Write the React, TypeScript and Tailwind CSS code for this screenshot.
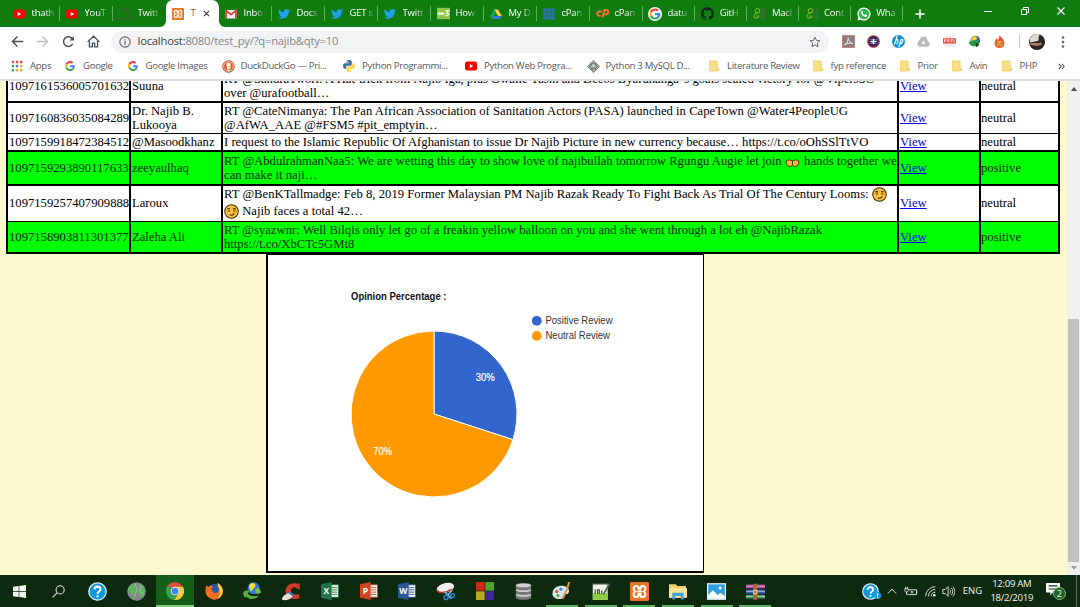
import React from "react";

type Kids = { children?: React.ReactNode };

const Svg = ({ children, vb = "0 0 16 16", cls = "size-[12px]" }: Kids & { vb?: string; cls?: string }) => (
  <svg viewBox={vb} className={`block shrink-0 ${cls}`} fill="none">
    {children}
  </svg>
);

/* ---------- shared brand icons ---------- */
const YouTube = () => (
  <Svg>
    <rect x="0" y="2" width="16" height="12" rx="3" fill="#f00" />
    <path d="M6.3 5.2v5.6L11 8z" fill="#fff" />
  </Svg>
);
const Twitter = () => (
  <Svg vb="0 0 24 24">
    <path
      fill="#1da1f2"
      d="M24 4.6a10 10 0 0 1-2.8.8 5 5 0 0 0 2.1-2.7 10 10 0 0 1-3.1 1.2 4.9 4.9 0 0 0-8.4 4.5A14 14 0 0 1 1.7 3.100a4.900 4.900 0 0 0 1.500 6.600 4.900 4.900 0 0 1-2.200-.6v.06a4.900 4.900 0 0 0 4 4.800 5 5 0 0 1-2.200.1 4.900 4.900 0 0 0 4.600 3.400A10 10 0 0 1 0 19.500a14 14 0 0 0 7.500 2.200c9.100 0 14-7.500 14-14v-.6A10 10 0 0 0 24 4.600z"
    />
  </Svg>
);
const GoogleG = ({ disc = false }: { disc?: boolean }) => (
  <Svg vb={disc ? "-6 -6 60 60" : "0 0 48 48"} cls={disc ? "size-[14px] -mx-px" : "size-[10px] mx-px"}>
    {disc && <circle cx="24" cy="24" r="30" fill="#fff" />}
    <path fill="#EA4335" d="M24 9.500c3.540 0 6.710 1.220 9.210 3.600l6.850-6.850C35.900 2.380 30.470 0 24 0 14.620 0 6.510 5.380 2.560 13.220l7.980 6.190C12.430 13.720 17.740 9.500 24 9.500z" />
    <path fill="#4285F4" d="M46.980 24.550c0-1.570-.15-3.090-.38-4.550H24v9.020h12.940c-.58 2.960-2.260 5.480-4.780 7.180l7.730 6c4.510-4.180 7.090-10.360 7.090-17.650z" />
    <path fill="#FBBC05" d="M10.530 28.590a14.500 14.500 0 0 1 0-9.180l-7.980-6.190a24 24 0 0 0 0 21.560z" />
    <path fill="#34A853" d="M24 48c6.480 0 11.930-2.130 15.890-5.810l-7.730-6c-2.150 1.450-4.920 2.300-8.160 2.300-6.260 0-11.570-4.220-13.470-9.910l-7.980 6.190C6.510 42.620 14.620 48 24 48z" />
  </Svg>
);
const Xampp = ({ cls = "size-[12px]" }: { cls?: string }) => (
  <Svg cls={cls}>
    <rect width="16" height="16" rx="1" fill="#ec7424" />
    <path
      d="M5.300 3.300C2.600 3.300 2.400 6.700 4.300 8 2.400 9.300 2.600 12.700 5.300 12.700c1.700 0 2-1.400 2-2.700h1.400c0 1.300.3 2.700 2 2.700 2.700 0 2.900-3.400 1-4.700 1.900-1.300 1.700-4.700-1-4.700-1.700 0-2 1.400-2 2.700H7.300c0-1.300-.3-2.700-2-2.700z"
      stroke="#fff"
      strokeWidth="1.700"
    />
    <path d="M6 8h4" stroke="#fff" strokeWidth="1.300" />
  </Svg>
);
const Gmail = () => (
  <Svg>
    <rect x="0.500" y="2.500" width="15" height="11.500" rx="1" fill="#f4f1f0" />
    <path d="M1.500 14V3.500L8 9l6.500-5.500V14" stroke="#d93a30" strokeWidth="2.200" />
  </Svg>
);
const Page = () => (
  <Svg>
    <path d="M3 1h7l3.500 3.500V15H3zM10 1v4h3.500" stroke="#3f5a35" strokeWidth="1.500" />
  </Svg>
);
const W3 = () => (
  <Svg cls="size-[13px] -mr-px">
    <rect width="16" height="14" y="1" fill="#8fc549" />
    <path d="M1 7l1.300 2.200L3.600 7l1.300 2.200L6.200 7l1.300 2.200L8.800 7M10 4.500h4L12 7.200c3.200 0 2.600 4.300-1.800 3.300" stroke="#fff" strokeWidth="1.400" />
  </Svg>
);
const Drive = () => (
  <Svg>
    <path d="M5.500 2h5l5.300 8.700h-5z" fill="#ffcf48" />
    <path d="M5.500 2L.2 10.700 2.700 14.500 8 6z" fill="#11a861" />
    <path d="M5.200 10.700h10.600l-2.500 3.800H2.700z" fill="#3777e3" />
  </Svg>
);
const BlueGrid = () => (
  <Svg>
    {[0, 1, 2].map((r) =>
      [0, 1, 2].map((c) => <rect key={`${r}${c}`} x={0.300 + c * 5.300} y={0.300 + r * 5.300} width="4.600" height="4.600" fill="#2a72b5" />),
    )}
  </Svg>
);
const CPanel = () => (
  <Svg cls="size-[13px] -mr-px">
    <path d="M7 5.500H4.500a2.700 2.700 0 0 0-.3 5.400h1.600M8.200 12.500L10.300 3.800h2.500a2.500 2.500 0 0 1-.3 5H10" stroke="#ff6c2c" strokeWidth="2.400" />
  </Svg>
);
const GitHub = () => (
  <Svg cls="size-[13px] -mr-px">
    <path
      fill="#12251a"
      d="M8 .3a8 8 0 0 0-2.500 15.600c.4 0 .5-.2.500-.4v-1.400c-2.200.5-2.700-1-2.700-1-.4-1-.9-1.200-.9-1.200-.7-.5.1-.5.1-.5.8 0 1.200.8 1.200.8.700 1.200 1.900.9 2.300.7.1-.5.3-.9.500-1.100-1.800-.2-3.600-.9-3.600-4 0-.8.300-1.500.8-2.100-.1-.2-.4-1 .1-2.100 0 0 .7-.2 2.200.8a7.600 7.600 0 0 1 4 0c1.500-1 2.200-.8 2.200-.8.400 1.100.2 1.900.1 2.100.5.600.8 1.300.8 2.100 0 3.100-1.900 3.700-3.700 3.900.3.300.6.800.6 1.500v2.200c0 .2.100.5.500.4A8 8 0 0 0 8 .3z"
    />
  </Svg>
);
const Gfg = () => (
  <Svg cls="size-[13px] -mr-px">
    <circle cx="5.500" cy="4.500" r="2.700" stroke="#6cb51d" strokeWidth="1.300" />
    <path d="M7 7.500C4 7 1 8.500 1.200 11.500S7 14.500 7.200 11H3.500" stroke="#6cb51d" strokeWidth="1.300" />
    <path d="M10 2.500h4M10 2v12M14 2v12M10 8h4M10 13.500h4" stroke="#4d6a45" strokeWidth="1.300" />
  </Svg>
);
const WhatsApp = () => (
  <Svg cls="size-[14px] -mx-px">
    <path d="M8 .5a7.500 7.500 0 1 1-3.700 14L.5 15.500l1-3.700A7.500 7.500 0 0 1 8 .5z" fill="#fff" />
    <circle cx="8" cy="8" r="6" fill="#2bb741" />
    <path d="M5.300 4.300l1.100.1.700 1.700-.6.800c.6 1.200 1.400 1.900 2.500 2.400l.9-.9 1.700.9c.2 1.500-1 2.200-2.200 2C6.600 10.800 4.700 8.400 4.500 6.300c0-.8.2-1.600.8-2z" fill="#fff" />
  </Svg>
);

const tabs: { label: string; icon: React.ReactNode; active?: boolean }[] = [
  { label: "thath", icon: <YouTube /> },
  { label: "YouT", icon: <YouTube /> },
  { label: "Twitt", icon: <Page /> },
  { label: "T", icon: <Xampp />, active: true },
  { label: "Inbo", icon: <Gmail /> },
  { label: "Docs", icon: <Twitter /> },
  { label: "GET s", icon: <Twitter /> },
  { label: "Twitt", icon: <Twitter /> },
  { label: "How", icon: <W3 /> },
  { label: "My D", icon: <Drive /> },
  { label: "cPan", icon: <BlueGrid /> },
  { label: "cPan", icon: <CPanel /> },
  { label: "datu", icon: <GoogleG disc /> },
  { label: "GitH", icon: <GitHub /> },
  { label: "Macl", icon: <Gfg /> },
  { label: "Cont", icon: <Gfg /> },
  { label: "Wha", icon: <WhatsApp /> },
];

const TabStrip = () => (
  <div className="flex h-[27px] shrink-0 bg-[#107c10] pl-[6.500px] text-[9.500px] tracking-[-0.200px] text-white">
    {tabs.map((t, i) =>
      t.active ? (
        <div key={i} className="relative flex w-[53px] shrink-0 items-center rounded-t-[7px] bg-white pl-[6.500px] text-[#5f6368]">
          <svg viewBox="0 0 6 6" className="absolute bottom-0 -left-[6px] size-[6px]">
            <path d="M6 0v6H0a6 6 0 0 0 6-6z" fill="#fff" />
          </svg>
          <svg viewBox="0 0 6 6" className="absolute -right-[6px] bottom-0 size-[6px]">
            <path d="M0 0v6h6a6 6 0 0 1-6-6z" fill="#fff" />
          </svg>
          {t.icon}
          <span className="ml-[6.500px] w-[7px] whitespace-nowrap">{t.label}</span>
          <Svg vb="0 0 8 8" cls="size-[7px] ml-[5.500px]">
            <path d="M1 1l6 6M7 1L1 7" stroke="#3c4043" strokeWidth="1.300" />
          </Svg>
        </div>
      ) : (
        <div key={i} className={`flex shrink-0 items-center pl-[6.500px] ${i < 12 ? "w-[53px]" : "w-[52.200px]"}`}>
          {t.icon}
          <span className="ml-[6.500px] shrink-0 whitespace-nowrap [mask-image:linear-gradient(to_right,black_60%,rgba(0,0,0,0.25))]">{t.label}</span>
          {i !== 2 && <span className="ml-auto h-[15px] w-px bg-[#5fae57]" />}
        </div>
      ),
    )}
    <div className="flex flex-1 items-center pl-[12px]">
      <Svg vb="0 0 10 10" cls="size-[10px]">
        <path d="M5 .5v9M.5 5h9" stroke="#fff" strokeWidth="1.500" />
      </Svg>
      <Svg vb="0 0 10 10" cls="ml-[58px] mb-[5px] size-[10px]">
        <path d="M1 5.500h8" stroke="#fff" />
      </Svg>
      <Svg vb="0 0 10 10" cls="ml-[27px] mb-[5px] size-[10px]">
        <path d="M1.500 3.500h5v5h-5zM3.500 3V1.500h5v5H7" stroke="#fff" />
      </Svg>
      <Svg vb="0 0 10 10" cls="ml-[26px] mb-[5px] size-[10px]">
        <path d="M1.500 1.500l7 7M8.500 1.500l-7 7" stroke="#fff" strokeWidth="1.100" />
      </Svg>
    </div>
  </div>
);

const extensions: React.ReactNode[] = [
  <Svg cls="size-[13px]">
    <rect width="16" height="16" fill="#8c7b7b" />
    <rect x=".5" y=".5" width="15" height="15" stroke="#c98a8a" />
    <path d="M3 12c3-1 5-5 4.500-8.500C9 9 11 10.500 13.500 10.500c-3-1-7-.5-10.500 1.500z" stroke="#eee" strokeWidth="1.200" />
  </Svg>,
  <Svg cls="size-[13px]">
    <circle cx="8" cy="8" r="7" fill="#23235e" stroke="#a8323e" strokeWidth="1.500" />
    <path d="M3 5.500h10M3 8h10M3 10.500h10" stroke="#8c95dd" strokeWidth=".8" />
    <path d="M8 4.500v7M4.500 8h7" stroke="#fff" strokeWidth="1.800" />
  </Svg>,
  <Svg cls="size-[13px]">
    <circle cx="8" cy="8" r="8" fill="#0b91d3" />
    <path d="M6.500 1L3 11.500M4.700 6.500c2-1.300 3-.6 2.500 1L6 11.500M11.500 5L8.300 15M10.800 5.300h1.600c1.300 0 1.200 1 .8 2.200-.7 2.300-1 3.200-2.400 3.200H9.500" stroke="#fff" strokeWidth="1.500" />
  </Svg>,
  <Svg cls="size-[13px]">
    <path d="M5.500 2h5L16 11l-2.500 3.500h-11L0 11z" fill="#b9b9b9" />
    <path d="M8 6.500l2.700 4.500H5.300z" fill="#f7f7f7" />
  </Svg>,
  <Svg cls="size-[13px]">
    <rect x="1.500" y="1" width="13" height="14" fill="#f5eeee" />
    <rect y="4" width="16" height="6.500" fill="#e8483d" />
    <path d="M2 9V5.500h1.500v1.800H2M6 5.500h1.200v3H6zM10 9V5.500h2M10 7.200h1.600M13.500 5v4.500" stroke="#fff" strokeWidth=".9" />
  </Svg>,
  <Svg cls="size-[13px]">
    <circle cx="9" cy="7" r="6" fill="#2a66c8" />
    <path d="M5 3c2-2 6-2 6 1S7 7 6 9 2 6 5 3z" fill="#f3cf2b" />
    <path d="M1 9c4-3 9-3 13-1-1 4-4 6-7 6s-5-2-6-5z" fill="#2c9a3a" />
    <path d="M9 9l5 3-4 3z" fill="#143c1a" />
  </Svg>,
  <Svg cls="size-[13px]">
    <path d="M8 0c1 3 6 4 6 10 0 4-3 6-6 6s-6-2-6-6c0-3 1.500-4 2-6l2 2c1-1.500 2-3 2-6z" fill="#e9532b" />
    <circle cx="8" cy="11" r="3.800" fill="#fba83b" />
    <path d="M6 9.500v1.500M10 9.500v1.500M6 12.500c1 1.200 3 1.200 4 0" stroke="#53210d" />
  </Svg>,
];

const Toolbar = () => (
  <div className="flex h-[28px] shrink-0 items-center bg-white pl-[11px] pt-px">
    <Svg cls="size-[13px]">
      <path d="M15 8H2M8 1.800L1.800 8 8 14.200" stroke="#4a4d51" strokeWidth="1.700" />
    </Svg>
    <Svg cls="size-[13px] ml-[12px]">
      <path d="M1 8h13M8 1.800L14.200 8 8 14.200" stroke="#bcbec1" strokeWidth="1.700" />
    </Svg>
    <Svg cls="size-[13px] ml-[12.500px]">
      <path d="M13.200 11A6 6 0 1 1 12.500 4.200L14 5.800" stroke="#4a4d51" strokeWidth="1.800" />
      <path d="M14.500 1.500v5.200H9.300z" fill="#4a4d51" />
    </Svg>
    <Svg cls="size-[13px] ml-[12.500px]">
      <path d="M.8 8.500L8 1.500l7.200 7M3 7.500v7h3.600V10h2.800v4.500H13v-7" stroke="#4a4d51" strokeWidth="1.600" />
    </Svg>
    <div className="ml-[11px] flex h-[22px] w-[718px] items-center rounded-full bg-[#f1f3f4] pl-[8px] pr-[8px] text-[11.200px] tracking-[-0.190px] text-[#80868b]">
      <Svg cls="size-[12px]">
        <circle cx="8" cy="8" r="6.900" stroke="#5f6368" strokeWidth="1.500" />
        <path d="M8 7v4.500M8 4.300v1.600" stroke="#5f6368" strokeWidth="1.700" />
      </Svg>
      <span className="ml-[6.500px] whitespace-nowrap">
        <span className="text-[#3c4043]">localhost:</span>8080/test_py/?q=najib&amp;qty=10
      </span>
      <Svg cls="size-[12px] ml-auto">
        <path d="M8 1.500l2 4.300 4.600.5-3.400 3.200.9 4.700L8 11.900l-4.100 2.300.9-4.700L1.400 6.300 6 5.800z" stroke="#5f6368" strokeWidth="1.300" />
      </Svg>
    </div>
    <div className="ml-[12.500px] flex gap-[12.300px]">
      {extensions.map((e, i) => (
        <React.Fragment key={i}>{e}</React.Fragment>
      ))}
    </div>
    <span className="ml-[12.500px] h-[13px] w-px bg-[#c8cacd]" />
    <Svg cls="size-[16px] ml-[9.500px]">
      <circle cx="8" cy="8" r="8" fill="#2b2422" />
      <path d="M1 4.500A8 8 0 0 1 11 .6C8 4 11 5 9 7L1 8.500z" fill="#dcd8d4" />
      <path d="M1 9.500c4-1 8 0 11-1l1 2c-3 1.500-7 2-12 0z" fill="#a98264" />
    </Svg>
    <Svg cls="size-[14px] ml-[11px]">
      <circle cx="8" cy="2.800" r="1.500" fill="#5f6368" />
      <circle cx="8" cy="8" r="1.500" fill="#5f6368" />
      <circle cx="8" cy="13.200" r="1.500" fill="#5f6368" />
    </Svg>
  </div>
);

const Folder = () => (
  <Svg>
    <path d="M1.500 1h11v12.500l2 .5v1H2.500l-1-1z" fill="#fbdf86" />
    <path d="M12.500 11v3h2v-3z" fill="#eec14a" />
    <path d="M2 1.500h10v13H2z" stroke="#f0cd68" />
  </Svg>
);
const appColors = ["#e04a3c", "#e04a3c", "#d9453a", "#3d9c52", "#4a79d8", "#e0b23c", "#3d9c52", "#e0a83c", "#e0a83c"];

const bookmarks: { w: string; label: string; icon: React.ReactNode }[] = [
  {
    w: "w-[53px]",
    label: "Apps",
    icon: (
      <Svg>
        {appColors.map((c, i) => (
          <rect key={i} x={1 + (i % 3) * 5.500} y={1 + Math.floor(i / 3) * 5.500} width="3.200" height="3.200" fill={c} />
        ))}
      </Svg>
    ),
  },
  { w: "w-[62.500px]", label: "Google", icon: <GoogleG /> },
  { w: "w-[95px]", label: "Google Images", icon: <GoogleG /> },
  {
    w: "w-[121.500px]",
    label: "DuckDuckGo — Pri...",
    icon: (
      <Svg cls="size-[13px] -mr-px">
        <circle cx="8" cy="8" r="7.200" fill="#de5833" stroke="#c54824" />
        <circle cx="8" cy="8" r="6" stroke="#fff" strokeWidth=".8" />
        <path d="M5.500 5c1-2.500 5-2 5 1l-.3 7.200c-1.500.6-2.500.5-3.200.2z" fill="#fff" />
        <path d="M7.500 7.500h4l-1 1.500h-3z" fill="#fdd20a" />
        <path d="M8 10.500l3.500 1-1 1.500H8z" fill="#4cba3c" />
      </Svg>
    ),
  },
  {
    w: "w-[122px]",
    label: "Python Programmi...",
    icon: (
      <Svg>
        <path d="M8 0C4.500 0 4.600 1.500 4.600 3.500H8.200V4.200H3C0 4.200 0 7.500 0 8s0 3.800 2.800 3.800H4V9.500C4 8 5 7.500 6 7.500h4c1 0 1.700-.8 1.700-1.700V3C11.700.5 10 0 8 0z" fill="#3771a3" />
        <path d="M8 16c3.500 0 3.400-1.500 3.400-3.500H7.800v-.7H13c3 0 3-3.300 3-3.800s0-3.800-2.800-3.800h-.9v2.300c0 1.500-1 2-2 2h-4c-1 0-1.900.8-1.900 1.700V13c0 2.500 1.600 3 3.600 3z" fill="#ffd343" />
        <circle cx="6.300" cy="2.100" r=".8" fill="#fff" />
        <circle cx="9.700" cy="13.900" r=".8" fill="#fff" />
      </Svg>
    ),
  },
  { w: "w-[121.500px]", label: "Python Web Progra...", icon: <YouTube /> },
  {
    w: "w-[121.500px]",
    label: "Python 3 MySQL D...",
    icon: (
      <Svg cls="size-[13px] -mr-px">
        <path d="M8 .5L15.500 8 8 15.500.5 8z" fill="#a5aaa5" stroke="#636b66" />
        <circle cx="8" cy="8" r="3.500" fill="#dfe5e0" stroke="#39463e" />
        <path d="M6.500 7v1M9.500 7v1M6.500 9.500h3" stroke="#39463e" />
      </Svg>
    ),
  },
  { w: "w-[103.500px]", label: "Literature Review", icon: <Folder /> },
  { w: "w-[87px]", label: "fyp reference", icon: <Folder /> },
  { w: "w-[52px]", label: "Prior", icon: <Folder /> },
  { w: "w-[50px]", label: "Avin", icon: <Folder /> },
  { w: "w-[57px]", label: "PHP", icon: <Folder /> },
];

const BookmarkBar = () => (
  <div className="flex h-[24px] shrink-0 items-center bg-white pb-px pl-[11px] text-[9.600px] tracking-[-0.310px] text-[#55595e]">
    {bookmarks.map((b, i) => (
      <div key={i} className={`flex shrink-0 items-center ${b.w}`}>
        {b.icon}
        <span className="ml-[7px] whitespace-nowrap">{b.label}</span>
      </div>
    ))}
    <Svg cls="size-[7px]">
      <path d="M2 2l5 6-5 6M9 2l5 6-5 6" stroke="#4a4d51" strokeWidth="2.500" />
    </Svg>
  </div>
);

/* ---------- page content ---------- */
const Smirk = () => (
  <svg viewBox="0 0 16 16" className="mb-[2px] inline-block size-[15px] align-middle" fill="none">
    <circle cx="8" cy="8" r="7.200" fill="#fcc13c" stroke="#3a2d14" strokeWidth="1.100" />
    <path d="M3.500 5.500c1-.8 2-.8 3 0M9.500 5.500c1-.8 2-.8 3 0M4 7.500h2.300M10 7.500h2.300M6 11.500c2 .8 4 .3 5-1.500" stroke="#3a2d14" strokeWidth="1.100" />
  </svg>
);
const Hands = () => (
  <svg viewBox="0 0 16 10" className="mx-[0.500px] inline-block h-[9px] w-[15px] align-[-3px]" fill="none">
    <path d="M1 2c2-1.500 5-1 6.500 0h1C10 1 13 .5 15 2c.5 3-1.500 6.500-4 6.500-1.500 0-2.500-1-3-2-.5 1-1.500 2-3 2C2.500 8.500.5 5 1 2z" fill="#ffb53d" stroke="#3a2d14" />
    <path d="M8 2v4.500" stroke="#3a2d14" />
  </svg>
);

type Row = { h: string; id: string; user: React.ReactNode; lines: React.ReactNode[]; lineH?: string; track?: string; pos?: boolean };
const rows: Row[] = [
  {
    h: "h-[30px] mb-[2px]",
    id: "1097161536005701632",
    user: "Suuna",
    lines: ["RT @SandraTwori: A Hat-trick from Najib Iga, plus Owalle Yasin and Decos Byaruhanga 's goals sealed victory for @VipersSC", "over @urafootball…"],
  },
  {
    h: "h-[30px] mb-px",
    id: "1097160836035084289",
    track: "tracking-[0.027px]",
    user: (
      <>
        Dr. Najib B.
        <br />
        Lukooya
      </>
    ),
    lines: ["RT @CateNimanya: The Pan African Association of Sanitation Actors (PASA) launched in CapeTown @Water4PeopleUG", "@AfWA_AAE @#FSM5 #pit_emptyin…"],
  },
  {
    h: "h-[16px] mb-[2px]",
    id: "1097159918472384512",
    track: "tracking-[0.010px]",
    user: "@Masoodkhanz",
    lines: ["I request to the Islamic Republic Of Afghanistan to issue Dr Najib Picture in new currency because… https://t.co/oOhSSlTtVO"],
  },
  {
    h: "h-[32px] mb-[2px]",
    id: "1097159293890117633",
    track: "tracking-[0.027px]",
    user: "zeeyaulhaq",
    pos: true,
    lines: [
      <>
        RT @AbdulrahmanNaa5: We are wetting this day to show love of najibullah tomorrow Rgungu Augie let join <Hands /> hands together we
      </>,
      "can make it naji…",
    ],
  },
  {
    h: "h-[35px] mb-px",
    id: "1097159257407909888",
    track: "tracking-[0.025px]",
    user: "Laroux",
    lineH: "h-[17px]",
    lines: [
      <>
        RT @BenKTallmadge: Feb 8, 2019 Former Malaysian PM Najib Razak Ready To Fight Back As Trial Of The Century Looms: <Smirk />
      </>,
      <>
        <Smirk /> Najib faces a total 42…
      </>,
    ],
  },
  {
    h: "h-[30px]",
    id: "1097158903811301377",
    track: "tracking-[0.008px]",
    user: "Zaleha Ali",
    pos: true,
    lines: ["RT @syazwnr: Well Bilqis only let go of a freakin yellow balloon on you and she went through a lot eh @NajibRazak", "https://t.co/XbCTc5GMt8"],
  },
];

const ResultTable = () => (
  <div className="-mt-[10px] ml-[6px] flex w-[1054px] shrink-0 flex-col bg-black px-[2px] pb-[2px] font-['Liberation_Serif',serif] text-[12.650px] leading-[14.200px] whitespace-nowrap text-black">
    {rows.map((r) => {
      const cell = `flex flex-col justify-center pl-px ${r.pos ? "bg-[#00ff00]" : "bg-white"}`;
      return (
        <div key={r.id} className={`grid grid-cols-[121px_90px_674px_80px_77px] gap-x-[2px] ${r.h} ${r.pos ? "text-[#002a00]" : ""}`}>
          <div className={cell}>{r.id}</div>
          <div className={cell}>{r.user}</div>
          <div className={`${cell} ${r.track ?? ""}`}>
            {r.lines.map((l, i) => (
              <div key={i} className={r.lineH ?? "h-[14.200px]"}>
                {l}
              </div>
            ))}
          </div>
          <div className={cell}>
            <span className="text-[#0000ee] underline">View</span>
          </div>
          <div className={cell}>
            <span className="-ml-px">{r.pos ? "positive" : "neutral"}</span>
          </div>
        </div>
      );
    })}
  </div>
);

const Chart = () => (
  <div className="ml-[266px] flex h-[319px] w-[438px] shrink-0 flex-col border-t border-r border-b-2 border-l-2 border-black bg-white">
    <svg viewBox="0 0 435 316" className="block h-[316px] w-[435px]" fontFamily="'Liberation Sans', Arial, sans-serif" fontSize="10">
      <text x="83" y="44.500" fontWeight="bold" textLength="95.500" lengthAdjust="spacingAndGlyphs" fill="#111">
        Opinion Percentage :
      </text>
      <path d="M166 159V76a83 83 0 0 1 78.940 108.650z" fill="#3366cc" stroke="#fff" strokeWidth="1" />
      <path d="M166 159L244.940 184.650A83 83 0 1 1 166 76z" fill="#ff9900" stroke="#fff" strokeWidth="1" />
      <text x="207.700" y="125.500" textLength="18.800" lengthAdjust="spacingAndGlyphs" fill="#fff" stroke="#fff" strokeWidth=".2">
        30%
      </text>
      <text x="105.300" y="199.500" textLength="18.800" lengthAdjust="spacingAndGlyphs" fill="#fff" stroke="#fff" strokeWidth=".2">
        70%
      </text>
      <circle cx="268.800" cy="65.800" r="4.900" fill="#3366cc" />
      <circle cx="268.800" cy="80.900" r="4.900" fill="#ff9900" />
      <text x="277.500" y="69.300" textLength="67" lengthAdjust="spacingAndGlyphs" fill="#333">
        Positive Review
      </text>
      <text x="277.500" y="84.300" textLength="64.500" lengthAdjust="spacingAndGlyphs" fill="#333">
        Neutral Review
      </text>
    </svg>
  </div>
);

const Scrollbar = () => (
  <div className="flex w-[13px] shrink-0 flex-col items-center bg-[#f0f0f0]">
    <Svg vb="0 0 6 4" cls="mt-[6px] h-[4px] w-[6px]">
      <path d="M3 0l3 4H0z" fill="#505050" />
    </Svg>
    <div className="mt-[228px] h-[243px] w-[11px] bg-[#c1c1c1]" />
    <Svg vb="0 0 6 4" cls="mt-[4px] h-[4px] w-[6px]">
      <path d="M3 4l3-4H0z" fill="#a0a0a0" />
    </Svg>
  </div>
);

/* ---------- taskbar ---------- */
const Office = ({ letter, color }: { letter: string; color: string }) => (
  <Svg cls="size-[18px]">
    <rect x="8" y="2.500" width="7.500" height="11" fill="#f7f7f7" stroke={color} strokeWidth=".7" />
    <path d="M9.500 5h5M9.500 7h5M9.500 9h5M9.500 11h5" stroke={color} strokeWidth=".8" />
    <path d="M0 2l9.500-2v16L0 14z" fill={color} />
    <text x="4.700" y="10.800" fontSize="7.500" fontWeight="bold" textAnchor="middle" fill="#fff" fontFamily="'Open Sans', sans-serif">
      {letter}
    </text>
  </Svg>
);
const Help = ({ cls = "size-[19px]" }: { cls?: string }) => (
  <Svg cls={cls}>
    <circle cx="8" cy="8" r="7.300" fill="#1297dc" stroke="#eaf6fd" strokeWidth="1.100" />
    <path d="M5.500 6.300c0-3.200 5-3.200 5 0C10.500 8 8 8 8 10M8 11.200v1.700" stroke="#fff" strokeWidth="1.700" />
  </Svg>
);

const tasks: { icon: React.ReactNode; open?: boolean; active?: boolean }[] = [
  {
    icon: (
      <Svg cls="size-[13px] mr-px">
        <path d="M0 2.300L7 1.300v6.200H0zM7.800 1.200L16 0v7.500H7.800zM0 8.400h7v6.300l-7-1zM7.800 8.400H16V16l-8.200-1.200z" fill="#f2f7f2" />
      </Svg>
    ),
  },
  {
    icon: (
      <Svg cls="size-[13px] mr-[2px]">
        <circle cx="10" cy="6" r="5" stroke="#e3e9e3" strokeWidth="1.300" />
        <path d="M6.500 9.500L.8 15.200" stroke="#e3e9e3" strokeWidth="1.300" />
      </Svg>
    ),
  },
  { icon: <Help /> },
  {
    icon: (
      <Svg cls="size-[19px]">
        <circle cx="8" cy="8" r="7.800" fill="#85878d" />
        <path d="M3 2.500l4 1-1 2.500 1.500 2L5 11 2 8 .8 5.500zM9 1.500l4.500 1.700 1.700 4-2 3.800-2 2.500-1-4-2-2.500 2-1.500zM4 12l2.500.5L6 15z" fill="#4fc054" />
        <path d="M6.500 1l2 5-2 6M12 3l-1 4 3 3" stroke="#a7a9ad" />
      </Svg>
    ),
  },
  {
    active: true,
    icon: (
      <Svg cls="size-[18px]">
        <path d="M8 8L1.500 3.400A8 8 0 0 1 15 4.200z" fill="#de4b3b" />
        <path d="M8 8L1.400 3.400A8 8 0 0 0 7.500 16l3.500-6z" fill="#35a152" />
        <path d="M7.500 16A8 8 0 0 0 15.100 4.300H8l3.200 5.600z" fill="#fccb3d" />
        <circle cx="8" cy="8" r="3.800" fill="#f4f7f4" />
        <circle cx="8" cy="8" r="3" fill="#447fe8" />
      </Svg>
    ),
  },
  {
    icon: (
      <Svg cls="size-[18px]">
        <circle cx="8.500" cy="7.500" r="6" fill="#2d5aa8" />
        <path d="M1 3l2 1.500C4 3 6 3 7 4c0 1-1 2-2 2 2 1 1 3 3 3.500 3 1 5-1 4.500-5L11 1c3 1 5 4 5 7.500A7.800 7.800 0 0 1 .5 9c-.3-2 0-4 .5-6z" fill="#f2701f" />
        <path d="M11 1c3 1 5 4 4.800 7.500-.3 3-2 5.500-4.800 6.500 2.500-3 3-7 1-10z" fill="#ffcd35" />
      </Svg>
    ),
  },
  {
    icon: (
      <Svg cls="size-[18px]">
        <circle cx="9.500" cy="5.500" r="5.300" fill="#3279cf" />
        <path d="M6 2c2-2 5-1 5 1S8 6 8 8 4 5 6 2z" fill="#f5d93c" />
        <path d="M11 6c3-1 4 0 5 3-2 2-4 2-5 0z" fill="#71c44c" />
        <path d="M0 10c1-3 4-3 6-2l-2 2c2 3 6 3 10 2-3 4-8 4-11 1l-1.500 1z" fill="#55b13c" />
      </Svg>
    ),
  },
  {
    icon: (
      <Svg cls="size-[19px]">
        <path d="M15 1v5l-2.500-.5c-2-2-5-1-5 2 0 2.500 2.500 4 6.500 2.500l1 3.500C9 16 3 13 3 8S8 0 12.500 1.500z" fill="#d23a2d" />
        <path d="M0 14c1-3 3-3.500 6-5l3 3c-2 3-6 4-9 3z" fill="#e6e0d4" />
        <path d="M5 9l4 3 1-1.500-3.500-3z" fill="#3b76b3" />
      </Svg>
    ),
  },
  { icon: <Office letter="X" color="#21744a" /> },
  { icon: <Office letter="P" color="#d14527" /> },
  { icon: <Office letter="W" color="#2a5699" /> },
  {
    icon: (
      <Svg cls="size-[19px]">
        <ellipse cx="8" cy="5" rx="7.500" ry="4" fill="#f1eded" transform="rotate(-15 8 5)" />
        <path d="M1 7c1 3 8 2 12-1" stroke="#c23b35" strokeWidth="1.300" />
        <path d="M7 8l6 6M13.500 7L9 12" stroke="#7fb7e0" strokeWidth="1.400" />
        <circle cx="8.500" cy="13" r="1.800" stroke="#2c7fc4" strokeWidth="1.200" />
        <circle cx="14" cy="11.500" r="1.600" stroke="#2c7fc4" strokeWidth="1.200" />
      </Svg>
    ),
  },
  {
    icon: (
      <Svg cls="size-[18px]">
        <path d="M0 0h7.700v7.700H0z" fill="#d0281c" />
        <path d="M8.300 0H16v7.700H8.300z" fill="#4ca82d" />
        <path d="M0 8.300h7.700V16H0z" fill="#b9a91c" />
        <path d="M8.300 8.300H16V16H8.300z" fill="#43259c" />
      </Svg>
    ),
  },
  {
    icon: (
      <Svg cls="size-[19px]">
        {[11.500, 7.500, 3.500].map((y) => (
          <g key={y}>
            <path d={`M1.500 ${y - 1}v2.500c0 2.600 13 2.600 13 0V${y - 1}z`} fill="#77797b" />
            <ellipse cx="8" cy={y - 0.800} rx="6.500" ry="1.700" fill="#cfd1d2" />
          </g>
        ))}
      </Svg>
    ),
  },
  {
    open: true,
    icon: (
      <Svg cls="size-[19px]">
        <path d="M.5 9C1 4 7 2 12 4c3 2 3 5 1 6-2 0-3 0-3 2s-3 3-6 2-4-3-3.500-5z" fill="#d8e4ec" />
        <circle cx="4" cy="8" r="1.300" fill="#d3453d" />
        <circle cx="7.500" cy="6" r="1.300" fill="#3a8fd0" />
        <circle cx="5" cy="11.500" r="1.300" fill="#4fa63f" />
        <path d="M14.500 0l-1.500 5-4 9" stroke="#e09b3b" strokeWidth="1.700" />
      </Svg>
    ),
  },
  {
    open: true,
    icon: (
      <Svg cls="size-[19px]">
        <path d="M1.500 1.500h12.500v13.500H1.500z" fill="#f3f6ea" />
        <path d="M1.500 9.500h12.500v5.500H1.500z" fill="#8fce3e" />
        <path d="M3.500 10V6M5.500 10V6.500h1.500V10M9 10V7M1.500 1.500h12.500" stroke="#3b4832" />
        <path d="M15.500 1.500l-5 9" stroke="#55606a" strokeWidth="1.500" />
      </Svg>
    ),
  },
  { open: true, icon: <Xampp cls="size-[19px]" /> },
  {
    open: true,
    icon: (
      <Svg cls="size-[18px]">
        <path d="M0 2h6l1.500 1.500H15V14H0z" fill="#f3cf68" />
        <path d="M0 5.500h16V14H0z" fill="#fbe39a" />
        <path d="M3 15.500v-6h10v6h-2.500v-3h-5v3z" fill="#3aa4dd" />
      </Svg>
    ),
  },
  {
    open: true,
    icon: (
      <Svg cls="size-[19px]">
        <rect y="1" width="16" height="14" fill="#f7fbfe" />
        <rect x="1" y="2" width="14" height="12" fill="#2f9fe3" />
        <path d="M1 14v-3l4-4 4 4 2.500-2 3.500 3v2z" fill="#fff" />
        <circle cx="11" cy="5" r="1.300" fill="#fff" />
      </Svg>
    ),
  },
  {
    open: true,
    icon: (
      <Svg cls="size-[19px]">
        <rect y="2" width="16" height="4" rx="1" fill="#b0459c" />
        <rect y="6.300" width="16" height="4" rx="1" fill="#3867bd" />
        <rect y="10.600" width="16" height="4" rx="1" fill="#3c9c50" />
        <path d="M0 3.500h16M0 7.800h16M0 12.100h16" stroke="#e0d9e8" strokeWidth=".6" />
        <path d="M0 5.800h16M0 10.100h16M0 14.300h16" stroke="#16192a" strokeWidth=".9" />
        <path d="M6 1.500h3.500v13.500H6z" fill="#9b6934" />
        <path d="M6.500 7h2.500v3H6.500z" stroke="#f0c678" />
      </Svg>
    ),
  },
];

const Taskbar = () => (
  <div className="flex h-[32px] shrink-0 bg-[#0d2a0f] pl-px font-['Open_Sans',sans-serif] text-[9.500px] text-[#f0f5f0]">
    {tasks.map((t, i) => (
      <div key={i} className={`flex w-[38.700px] shrink-0 flex-col items-center ${t.active ? "bg-[#14601a]" : ""}`}>
        <div className="flex flex-1 items-center pt-[2px]">{t.icon}</div>
        <div className={`h-[2px] ${t.active ? "w-full bg-[#7ecb7c]" : t.open ? "w-[32px] bg-[#5fae5f]" : "w-0"}`} />
      </div>
    ))}
    <div className="ml-[87.500px] flex flex-1 items-center">
      <span className="flex">
        <Help cls="size-[17px]" />
        <Svg cls="-ml-[5px] mt-[9px] size-[7px]">
          <circle cx="8" cy="8" r="8" fill="#2a9be0" />
          <path d="M8 3v7M8 11.500v2" stroke="#fff" strokeWidth="2" />
        </Svg>
      </span>
      <Svg cls="ml-[6px] size-[10px]">
        <path d="M1.500 12L8 5l6.500 7" stroke="#e9efe9" strokeWidth="1.500" />
      </Svg>
      <Svg vb="0 0 20 16" cls="ml-[7px] h-[11px] w-[14px]">
        <path d="M7 5.500h11v7H7M18.500 7.500v3M9.500 7l4 4M13.500 7l-4 4M1 4h5v2.500c0 3-5 3-5 0zM2.300 4V1M4.700 4V1M3.500 8.500v3.500H7" stroke="#e9efe9" strokeWidth="1.300" />
      </Svg>
      <Svg cls="ml-[7px] size-[11px]">
        <path d="M1 15A14 14 0 0 1 15 1M5 15A10 10 0 0 1 15 5M9 15a6 6 0 0 1 6-6" stroke="#dfe8df" strokeWidth="1.400" />
        <circle cx="13.500" cy="13.500" r="1.800" fill="#fff" />
      </Svg>
      <Svg cls="ml-[6px] size-[13px]">
        <path d="M1 5.500h3L7.500 2v12L4 10.500H1zM9.500 5.500c1.300 1.500 1.300 3.500 0 5M11.500 3.500c2.300 2.700 2.300 6.300 0 9M13.500 2c2.800 3.500 2.800 8.500 0 12" stroke="#e3e9e3" strokeWidth="1.100" />
      </Svg>
      <span className="ml-[7.500px] w-[19px] text-center">ENG</span>
      <span className="ml-[8px] flex w-[44px] flex-col items-center text-[9.600px] leading-[14px] tracking-[-0.300px] whitespace-nowrap">
        <span>12:09 AM</span>
        <span>18/2/2019</span>
      </span>
      <span className="ml-[12px] flex">
        <Svg cls="size-[14px]">
          <path d="M0 1h16v11H8l-3 3.500V12H0z" fill="#f5f8f5" />
          <path d="M3 4.500h10M3 8h10" stroke="#16351a" strokeWidth="1.300" />
        </Svg>
        <span className="-ml-[7px] mt-[5px] flex size-[13px] items-center justify-center rounded-full border border-[#7db57d] bg-[#1d6324] text-[9px] leading-none">2</span>
      </span>
    </div>
    <div className="mr-[3px] w-px bg-[#5c705d]" />
  </div>
);

export default function App() {
  return (
    <div className="flex h-[607px] w-[1080px] flex-col overflow-hidden bg-white font-['Open_Sans','Noto_Sans',sans-serif]">
      <TabStrip />
      <Toolbar />
      <BookmarkBar />
      <div className="h-[2px] shrink-0 bg-[#dcdddd]" />
      <div className="flex h-[494px] shrink-0 overflow-hidden">
        <div className="flex flex-1 flex-col overflow-hidden bg-[#fef8cf]">
          <ResultTable />
          <Chart />
        </div>
        <Scrollbar />
      </div>
      <Taskbar />
    </div>
  );
}
